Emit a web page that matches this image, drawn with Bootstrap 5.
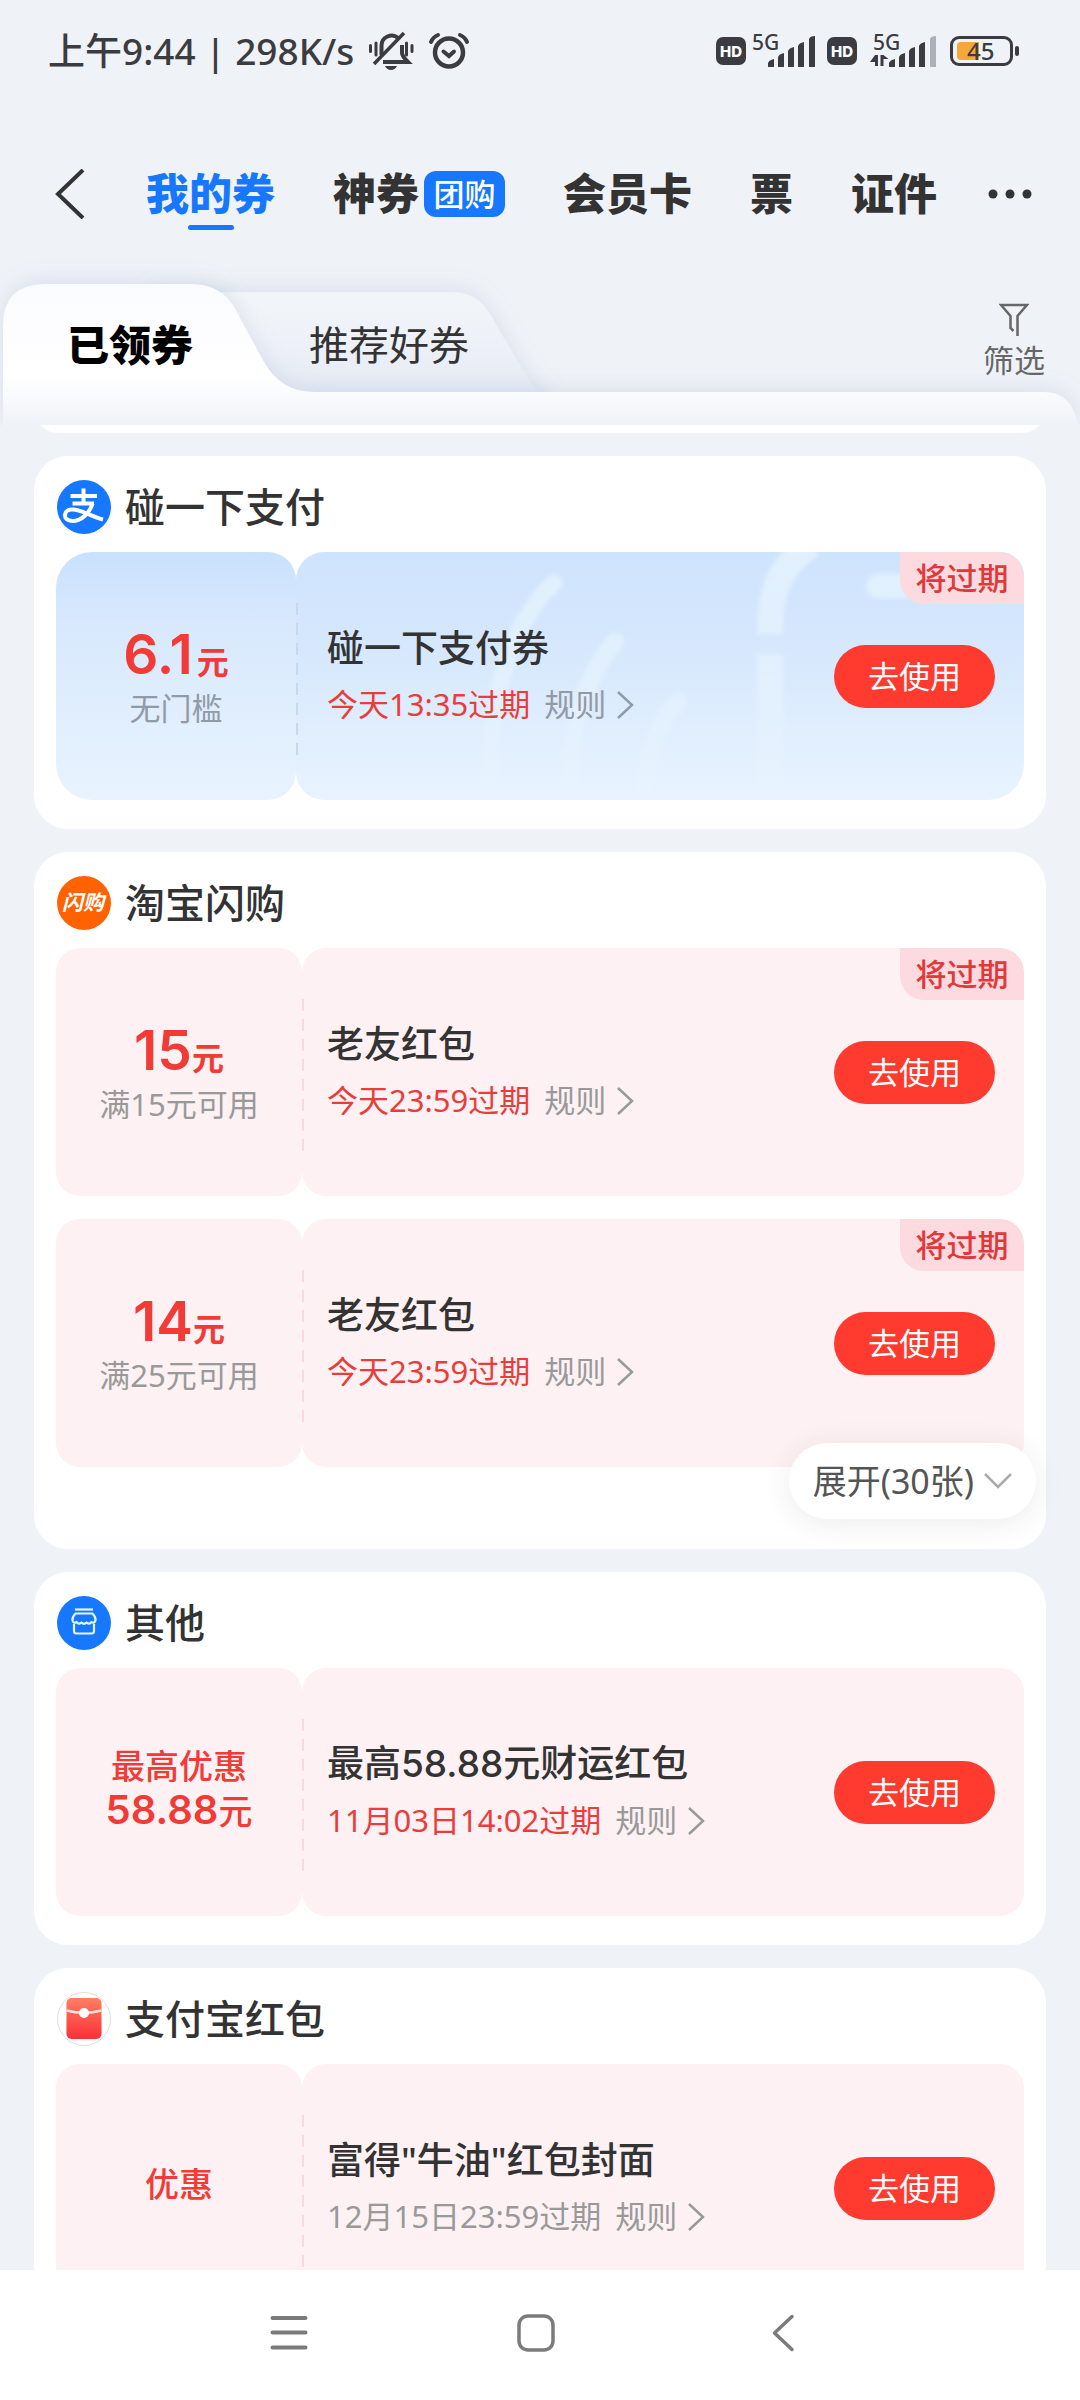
<!DOCTYPE html>
<html lang="zh-CN">
<head>
<meta charset="utf-8">
<meta name="viewport" content="width=device-width, initial-scale=1">
<title>我的券</title>
<link href="https://cdn.jsdelivr.net/npm/bootstrap@5.3.0/dist/css/bootstrap.min.css" rel="stylesheet">
<style>
  body { background: #eff2f7; color: #333; font-family: "Noto Sans", "Noto Sans CJK SC", sans-serif; font-size: 31px; line-height: 40px; }
  a, a:hover { color: inherit; text-decoration: none; }
  svg { display: block; flex: none; }
  button { color: inherit; }
  .num { font-family: Inter, "Noto Sans CJK SC", sans-serif; }

  /* system status bar */
  .statusbar { height: 102px; padding: 0 60px 0 48px; color: #3b3c41; font-size: 37px; font-weight: 500; }
  .status-icons { margin-left: 14px; gap: 14px; }

  /* top navigation */
  .topnav { height: 158px; padding: 26px 48px 0 55px; }
  .topnav-list { margin-left: 61px; gap: 58px; font-size: 43px; line-height: 60px; font-weight: 900; }
  .topnav-list .active { color: #1777ff; }
  .topnav-list .active::after { content: ""; position: absolute; left: 50%; bottom: -6px; width: 46px; height: 5px; margin-left: -23px; border-radius: 3px; background: #1777ff; }
  .pill { width: 81px; height: 46px; margin-left: 5px; border-radius: 12px; background: #1777ff; color: #fff; font-size: 31px; line-height: 46px; font-weight: 500; text-align: center; }

  /* folder tabs */
  .folder { height: 165px; padding: 5px 35px 0 67px; }
  .folder-shape { position: absolute; inset: 0; width: 100%; height: 100%; }
  .folder-on { font-size: 42px; font-weight: 900; color: #000; }
  .folder-off { font-size: 40px; margin-left: 116px; }
  .filter { color: #666; gap: 3px; font-size: 31px; line-height: 40px; }

  /* groups */
  .group { position: relative; border-radius: 34px; background: #fff; padding: 24px 22px 29px; margin: 0 34px 23px; }
  .group-tail { margin-top: -40px; height: 48px; padding: 0; }
  .group-more { padding-bottom: 82px; }
  .group-head { height: 54px; margin-bottom: 18px; gap: 14px; padding-left: 1px; }
  .group-head h2 { font-size: 40px; line-height: 54px; font-weight: 500; margin: 0; }

  /* coupons */
  .coupon { height: 248px; }
  .coupon + .coupon { margin-top: 23px; }
  .coupon-side { width: 246px; padding-bottom: 8px; border-radius: 24px; background: #fdf1f4; color: #f23a36; }
  .coupon-main { border-radius: 24px; background: #fdf1f4; padding: 0 29px 0 25px; overflow: hidden; }
  .coupon-main::before { content: ""; position: absolute; left: 0; top: 51px; bottom: 43px; width: 2px; background: repeating-linear-gradient(#f9d8df 0 12px, transparent 12px 20px); }
  .price { font-size: 55px; line-height: 72px; font-weight: 600; }
  .price span { font-size: 32px; line-height: 32px; font-weight: 700; }
  .price-note { line-height: 36px; color: #999; }
  .best { font-size: 34px; line-height: 44px; font-weight: 500; }
  .best-num { font-size: 40px; font-weight: 600; }
  .best-num span { font-size: 34px; line-height: 34px; font-weight: 500; }
  .coupon-name { font-size: 37px; line-height: 57px; font-weight: 500; margin: 0; }
  .coupon-meta { line-height: 57px; gap: 14px; color: #999; }
  .due { color: #e93d3b; }
  .rule { gap: 10px; }
  .use { width: 161px; height: 63px; padding: 0; border-radius: 32px; background: #ff3b30; color: #fff; font-size: 31px; line-height: 61px; position: relative; }
  .use:hover { background: #e9352b; color: #fff; }
  .soon { position: absolute; right: 0; top: 0; width: 124px; height: 52px; border-radius: 0 24px 0 24px; background: #fcdadf; color: #e0393a; line-height: 52px; font-weight: 500; text-align: center; }

  .coupon-sky .coupon-side { width: 240px; border-radius: 36px 28px 28px 36px; background: linear-gradient(#c9e1fd, #d8e9fd 30%, #e8f3fe); }
  .coupon-sky .coupon-main { border-radius: 28px 24px 36px 28px; background: linear-gradient(#cee3fd, #d5e7fd 35%, #e8f3fe); padding-left: 31px; }
  .coupon-sky .coupon-main::before { background: repeating-linear-gradient(#c6d7ee 0 12px, transparent 12px 20px); }
  .coupon-sky .price-note, .coupon-sky .coupon-meta { color: #929aa6; }
  .coupon-sky .due { color: #e93d3b; }
  .coupon-sky .price span { margin-left: 4px; }
  .sky-art { position: absolute; right: 0; top: 0; }

  .more { position: absolute; right: 10px; bottom: 30px; height: 76px; padding: 0 24px; gap: 10px; border: 0; border-radius: 38px; background: #fff; color: #555; font-size: 34px; box-shadow: 0 4px 30px rgba(60, 40, 50, .09); }

  .sysbar { height: 130px; padding: 0 8px 4px 0; background: #fff; }
  .sysbar button { width: 247px; border: 0; background: none; display: flex; justify-content: center; }
</style>
</head>
<body>
<div class="d-flex flex-column vh-100 overflow-hidden">

  <div class="statusbar flex-shrink-0 d-flex align-items-center justify-content-between">
    <div class="d-flex align-items-center">
      <span>上午9:44 | 298K/s</span>
      <div class="status-icons d-flex align-items-center">
        <svg width="46" height="42" viewBox="368 31 46 42" fill="none" stroke="#3b3c41" stroke-width="4" aria-label="静音">
          <path d="M370.500 46.500v6M376 44v12M406.500 44v12M412 46.500v6" stroke-width="3" stroke-linecap="round"/>
          <path d="M381.500 56V47a10 10 0 0 1 17-7.500M402 46v8q0 3 6 9H383"/>
          <path d="M374 65 404 34" stroke-width="3.500"/>
          <path d="M385 67h12q-2 4-6 4t-6-4z" fill="#3b3c41" stroke="none"/>
        </svg>
        <svg width="42" height="40" viewBox="427 31 42 40" fill="none" stroke="#3b3c41" stroke-width="4.500" stroke-linecap="round" aria-label="闹钟">
          <circle cx="448" cy="52.500" r="14"/>
          <path d="M442.500 51.500 448 56l5-4.500" stroke-width="4"/>
          <path d="M430 42q2-5 7-7M466 42q-2-5-7-7" stroke-width="4"/>
        </svg>
      </div>
    </div>
    <svg width="304" height="80" viewBox="717 11 304 80" fill="#3b3c41" font-family="Noto Sans">
      <rect x="717" y="37" width="30" height="28" rx="7"/><rect x="828" y="37" width="30" height="28" rx="7"/>
      <g fill="#fff" font-family="Inter" font-size="15" font-weight="800" text-anchor="middle"><text x="732" y="56.500">HD</text><text x="843" y="56.500">HD</text></g>
      <g font-size="21" font-weight="500"><text x="753" y="50">5G</text><text x="874" y="50">5G</text></g>
      <path id="bars" d="M769 67v-4q1-3 6-4v8zM779 67V57q1-3 6-4v14zM789 67V51q1-3 6-4v20zM799 67V46q1-3 6-4v25z"/>
      <path d="M810 67V39q1-3 6-3v31z"/>
      <use href="#bars" x="121"/>
      <path d="M931 67V39q1-3 6-3v31z" fill="#adb0b6"/>
      <path d="M876 55h3v11h-3v-4h-5zM881.500 66h3v-7h5l-5-4h-3z"/>
      <rect x="952.500" y="37.500" width="60" height="27" rx="7.500" fill="none" stroke="#3b3c41" stroke-width="3"/>
      <path d="M962 42h18v18h-18q-4 0-4-4V46q0-4 4-4z" fill="#f5a83a"/>
      <rect x="1016" y="46" width="4" height="10" rx="2"/>
      <text x="968" y="60" font-size="24" font-weight="500">45</text>
    </svg>
  </div>

  <nav class="topnav flex-shrink-0 d-flex align-items-center">
    <a href="#" aria-label="返回"><svg width="30" height="50" viewBox="0 0 30 50" fill="none" stroke="#333" stroke-width="4"><path d="M28 1 3 25l25 24"/></svg></a>
    <div class="topnav-list d-flex align-items-center">
      <a href="#" class="active position-relative">我的券</a>
      <a href="#" class="d-flex align-items-center">神券<span class="pill">团购</span></a>
      <a href="#">会员卡</a>
      <a href="#">票</a>
      <a href="#">证件</a>
    </div>
    <a href="#" class="ms-auto" aria-label="更多"><svg width="44" height="10" viewBox="0 0 44 10" fill="#333"><circle cx="5" cy="5" r="4.500"/><circle cx="22" cy="5" r="4.500"/><circle cx="39" cy="5" r="4.500"/></svg></a>
  </nav>

  <div class="folder flex-shrink-0 position-relative d-flex align-items-center">
    <svg class="folder-shape" viewBox="0 0 1080 165" preserveAspectRatio="none">
      <defs>
        <linearGradient id="on" x1="0" y1="0" x2="0" y2="1"><stop offset="0" stop-color="#f9fbfe"/><stop offset=".3" stop-color="#fdfdff"/><stop offset=".65" stop-color="#fff"/><stop offset=".8" stop-color="#f8fafd"/><stop offset="1" stop-color="#eff2f7"/></linearGradient>
        <linearGradient id="off" x1="0" y1="0" x2="0" y2="1"><stop offset="0" stop-color="#f2f5f8"/><stop offset=".35" stop-color="#eef1f8"/><stop offset=".75" stop-color="#e6eaf4"/></linearGradient>
        <filter id="soft" x="-10%" y="-30%" width="120%" height="160%"><feDropShadow dx="0" dy="-3" stdDeviation="10" flood-color="#8e9cc4" flood-opacity=".22"/></filter>
      </defs>
      <path filter="url(#soft)" fill="url(#off)" d="M150 165V32H450C478 32 488 48 498 68L528 118Q536 132 548 134V165Z"/>
      <path filter="url(#soft)" fill="url(#on)" d="M3 165V66Q3 24 45 24H190C220 24 232 40 241 60L264 102Q281 132 314 132H1044Q1072 132 1078 165Z"/>
    </svg>
    <a href="#" class="folder-on position-relative">已领券</a>
    <a href="#" class="folder-off position-relative">推荐好券</a>
    <button type="button" class="filter btn border-0 p-0 pb-2 ms-auto position-relative d-flex flex-column align-items-center">
      <svg width="30" height="34" viewBox="0 0 30 34" fill="none" stroke="#666" stroke-width="2.500"><path d="M18.500 33V13L28 2H2l9.500 11v12l3 3"/></svg>
      <span>筛选</span>
    </button>
  </div>

  <main class="flex-grow-1 overflow-hidden">
    <section class="group group-tail"></section>

    <section class="group">
      <div class="group-head d-flex align-items-center">
        <svg width="54" height="54" viewBox="0 0 54 54"><circle cx="27" cy="27" r="27" fill="#1677ff"/>
          <g fill="none" stroke="#fff" stroke-width="4"><path d="M13.500 16H40M26.500 8.500V23M15.500 23.500H37"/><path d="M35.500 23.500C33 32 25 41 15.500 41 10 41 7.500 38 8 34.500 8.500 31 12 29 16.500 29.500 26 30.500 36 37 46 39.500"/></g></svg>
        <h2>碰一下支付</h2>
      </div>
      <article class="coupon coupon-sky d-flex">
        <div class="coupon-side d-flex flex-column align-items-center justify-content-center">
          <div class="price num">6.1<span>元</span></div>
          <div class="price-note">无门槛</div>
        </div>
        <div class="coupon-main position-relative flex-grow-1 d-flex align-items-center justify-content-between">
          <svg class="sky-art" width="728" height="248" viewBox="296 552 728 248" fill="none" stroke-linecap="round">
            <defs>
              <linearGradient id="ray" gradientUnits="userSpaceOnUse" x1="0" y1="552" x2="0" y2="800"><stop offset="0" stop-color="#f0faff" stop-opacity=".6"/><stop offset=".5" stop-color="#f0faff" stop-opacity=".4"/><stop offset="1" stop-color="#f0faff" stop-opacity=".05"/></linearGradient>
              <filter id="haze" filterUnits="userSpaceOnUse" x="296" y="540" width="740" height="280"><feGaussianBlur stdDeviation="2"/></filter>
            </defs>
            <g stroke="url(#ray)" filter="url(#haze)">
              <path stroke-width="17" d="M554 583C515 620 490 680 489 790"/>
              <path stroke-width="18" d="M615 642C590 670 568 720 568 810"/>
              <path stroke-width="18" d="M678 702C655 725 645 760 645 810"/>
              <path stroke-width="26" stroke-linecap="butt" d="M812 545C778 565 770 595 770 634M770 653.900L770.100 805"/>
              <path stroke-width="24" d="M878 586H920"/>
            </g>
          </svg>
          <div class="position-relative">
            <h3 class="coupon-name">碰一下支付券</h3>
            <div class="coupon-meta d-flex"><span class="due">今天13:35过期</span><a href="#" class="rule d-flex align-items-center">规则<svg width="18" height="28" viewBox="0 0 18 28" fill="none" stroke="currentColor" stroke-width="2.500"><path d="M2 1l14 13L2 27"/></svg></a></div>
          </div>
          <button type="button" class="use btn">去使用</button>
          <span class="soon">将过期</span>
        </div>
      </article>
    </section>

    <section class="group group-more">
      <div class="group-head d-flex align-items-center">
        <svg width="54" height="54" viewBox="0 0 54 54"><circle cx="27" cy="27" r="27" fill="#ff6200"/><text x="26" y="34" text-anchor="middle" fill="#fff" font-family="Noto Sans CJK SC" font-size="21" font-weight="700" font-style="italic">闪购</text></svg>
        <h2>淘宝闪购</h2>
      </div>
      <article class="coupon d-flex">
        <div class="coupon-side d-flex flex-column align-items-center justify-content-center">
          <div class="price num">15<span>元</span></div>
          <div class="price-note">满15元可用</div>
        </div>
        <div class="coupon-main position-relative flex-grow-1 d-flex align-items-center justify-content-between">
          <div>
            <h3 class="coupon-name">老友红包</h3>
            <div class="coupon-meta d-flex"><span class="due">今天23:59过期</span><a href="#" class="rule d-flex align-items-center">规则<svg width="18" height="28" viewBox="0 0 18 28" fill="none" stroke="currentColor" stroke-width="2.500"><path d="M2 1l14 13L2 27"/></svg></a></div>
          </div>
          <button type="button" class="use btn">去使用</button>
          <span class="soon">将过期</span>
        </div>
      </article>
      <article class="coupon d-flex">
        <div class="coupon-side d-flex flex-column align-items-center justify-content-center">
          <div class="price num">14<span>元</span></div>
          <div class="price-note">满25元可用</div>
        </div>
        <div class="coupon-main position-relative flex-grow-1 d-flex align-items-center justify-content-between">
          <div>
            <h3 class="coupon-name">老友红包</h3>
            <div class="coupon-meta d-flex"><span class="due">今天23:59过期</span><a href="#" class="rule d-flex align-items-center">规则<svg width="18" height="28" viewBox="0 0 18 28" fill="none" stroke="currentColor" stroke-width="2.500"><path d="M2 1l14 13L2 27"/></svg></a></div>
          </div>
          <button type="button" class="use btn">去使用</button>
          <span class="soon">将过期</span>
        </div>
      </article>
      <button type="button" class="more d-flex align-items-center">展开(30张)<svg width="28" height="16" viewBox="0 0 28 16" fill="none" stroke="#aaa" stroke-width="2.500"><path d="M1 1l13 13L27 1"/></svg></button>
    </section>

    <section class="group">
      <div class="group-head d-flex align-items-center">
        <svg width="54" height="54" viewBox="0 0 54 54"><circle cx="27" cy="27" r="27" fill="#1677ff"/>
          <g fill="none" stroke="#e4f6ff" stroke-width="2.200" stroke-linejoin="round"><path d="M18 13.500H36"/><path d="M18.500 17.500H35.500Q39 21 38.500 24.500Q37 28 34.500 26Q32 29 29.500 26.500Q27 29 24.500 26.500Q22 29 19.500 26Q16.500 28 15.500 24.500Q15 21 18.500 17.500ZM17 28V35Q17 37.500 19.500 37.500H34.500Q37 37.500 37 35V28"/></g></svg>
        <h2>其他</h2>
      </div>
      <article class="coupon d-flex">
        <div class="coupon-side d-flex flex-column align-items-center justify-content-center">
          <div class="best">最高优惠</div>
          <div class="best best-num num">58.88<span>元</span></div>
        </div>
        <div class="coupon-main position-relative flex-grow-1 d-flex align-items-center justify-content-between">
          <div>
            <h3 class="coupon-name num">最高58.88元财运红包</h3>
            <div class="coupon-meta d-flex"><span class="due">11月03日14:02过期</span><a href="#" class="rule d-flex align-items-center">规则<svg width="18" height="28" viewBox="0 0 18 28" fill="none" stroke="currentColor" stroke-width="2.500"><path d="M2 1l14 13L2 27"/></svg></a></div>
          </div>
          <button type="button" class="use btn">去使用</button>
        </div>
      </article>
    </section>

    <section class="group">
      <div class="group-head d-flex align-items-center">
        <svg width="54" height="54" viewBox="0 0 54 54"><defs><linearGradient id="env" x1="0" y1="0" x2="0" y2="1"><stop offset="0" stop-color="#ff7f63"/><stop offset="1" stop-color="#fb2f36"/></linearGradient></defs>
          <circle cx="27" cy="27" r="26.500" fill="#fff" stroke="#ddd"/><rect x="9.500" y="6" width="35" height="41" rx="5" fill="url(#env)"/><path d="M9.500 18.500Q27 23 44.500 18.500" fill="none" stroke="#ffe3dc" stroke-width="2.500"/><circle cx="27" cy="21" r="5" fill="#fff"/></svg>
        <h2>支付宝红包</h2>
      </div>
      <article class="coupon d-flex">
        <div class="coupon-side d-flex flex-column align-items-center justify-content-center">
          <div class="best">优惠</div>
        </div>
        <div class="coupon-main position-relative flex-grow-1 d-flex align-items-center justify-content-between">
          <div>
            <h3 class="coupon-name">富得"牛油"红包封面</h3>
            <div class="coupon-meta d-flex"><span>12月15日23:59过期</span><a href="#" class="rule d-flex align-items-center">规则<svg width="18" height="28" viewBox="0 0 18 28" fill="none" stroke="currentColor" stroke-width="2.500"><path d="M2 1l14 13L2 27"/></svg></a></div>
          </div>
          <button type="button" class="use btn">去使用</button>
        </div>
      </article>
    </section>
  </main>

  <nav class="sysbar flex-shrink-0 d-flex align-items-center justify-content-center">
    <button type="button" aria-label="任务"><svg width="38" height="38" viewBox="0 0 38 38" stroke="#7b7b7b" stroke-width="4" stroke-linecap="round"><path d="M2.500 4H35.500M2.500 18.500H35.500M2.500 33.500H35.500"/></svg></button>
    <button type="button" aria-label="主页"><svg width="38" height="38" viewBox="0 0 38 38" fill="none" stroke="#7b7b7b" stroke-width="3.500"><rect x="2" y="2" width="34" height="34" rx="9"/></svg></button>
    <button type="button" aria-label="后退"><svg width="38" height="38" viewBox="0 0 38 38" fill="none" stroke="#7b7b7b" stroke-width="3.500" stroke-linecap="round" stroke-linejoin="round"><path d="M28 2.500 10.500 19 28 35.500"/></svg></button>
  </nav>
</div>
<script src="https://cdn.jsdelivr.net/npm/bootstrap@5.3.0/dist/js/bootstrap.bundle.min.js"></script>
</body>
</html>
